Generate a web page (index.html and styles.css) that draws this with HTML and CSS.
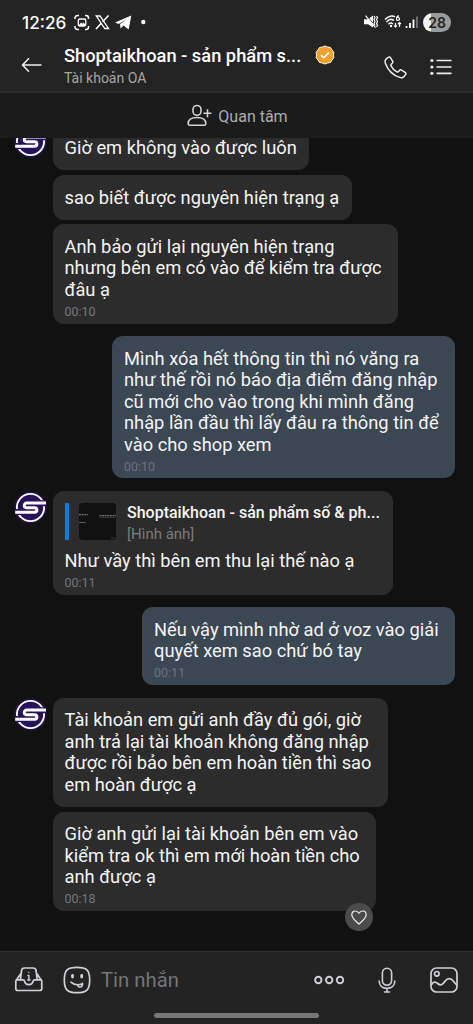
FILE: index.html
```html
<!DOCTYPE html>
<html lang="vi">
<head>
<meta charset="utf-8">
<title>Shoptaikhoan</title>
<link rel="stylesheet" href="styles.css">
</head>
<body>
<svg width="0" height="0" class="defs">
  <symbol id="logo" viewBox="0 0 33 33">
    <circle cx="16.5" cy="16.5" r="16.3" fill="#211044"/>
    <circle cx="16.5" cy="16.5" r="13.6" fill="#29125c" stroke="#fff" stroke-width="1.9"/>
    <path d="M32 12.2H13.2a2.2 2.2 0 0 0 0 4.4h7a2.2 2.2 0 0 1 0 4.5H1.2" fill="none" stroke="#29125c" stroke-width="6"/>
    <path d="M32 12H12.6a2.35 2.35 0 0 0 0 4.7h8a2.3 2.3 0 0 1 0 4.6H1.2" fill="none" stroke="#fff" stroke-width="3"/>
  </symbol>
</svg>
<div class="phone">
  <header class="header">
    <div class="status">
      <span class="clock">12:26</span>
      <svg class="status-left" width="74" height="18" viewBox="0 0 74 18" fill="none" stroke="#fff">
        <path d="M1 5V4a2.500 2.500 0 0 1 2.500-2.500H5M11 1.500h1A2.500 2.500 0 0 1 14.500 4v1M14.500 12v1a2.500 2.500 0 0 1-2.500 2.500h-1M5 15.500H3.500A2.500 2.500 0 0 1 1 13v-1" stroke-width="1.500"/>
        <rect x="4.300" y="5" width="7.500" height="7" rx="1.500" stroke-width="1.300"/><path d="m5 11 2-2.500 1.500 1.200 1.200-1.200L11.500 11v1H5z" fill="#fff" stroke="none"/>
        <path d="M22.300 2h3.700l8.500 12.500h-3.700z" stroke-width="1.300"/><path d="m34.500 1.500-5.900 6.300M27.200 9.200l-5.200 5.800" stroke-width="1.600"/>
        <path d="M41 8.500 57.300 1.500l-2.600 14-5.200-3.900-2.900 2.800-.6-4.300 7-5-8.400 4.800z" fill="#fff" stroke="none"/>
        <circle cx="69.300" cy="8" r="2.200" fill="#fff" stroke="none"/>
      </svg>
      <svg class="status-right" width="56" height="16" viewBox="0 0 56 16" fill="none" stroke="#fff">
        <path d="M0 5.300H4L9 1.500v12L4 10.200H0z" fill="#fff" stroke="none"/>
        <path d="m2.300 1 9.700 12" stroke="#242424" stroke-width="1"/><path d="m1.500 1.700 10 12" stroke-width="1.200"/>
        <path d="m10 2 1 1.500-1 2 1 2-1 2 1 2M12.500 2l1 1.500-1 2 1 2-1 2 1 2-1 1.500" stroke-width="1.200"/>
        <path d="M21 5.500c3.500-4 8-4 10-2.500M22.500 8c2.500-3 5.500-3 7.500-1.500M24.500 10.200c1.500-1.500 3-1.500 4.500-.2" stroke-width="1.500"/><circle cx="27" cy="12" r="1.200" fill="#fff" stroke="none"/>
        <path d="M35 1.800c-2 0-2.500 1.500-2.500 3a1.500 1.500 0 1 0 1-1.200M31.500 9v4m-1.300-1.500 1.300 1.500 1.300-1.500M35.500 13V8.500M34 10l1.500-1.500L37 10" stroke-width="1.200"/>
        <path d="M42.500 12v2M46 9v5M49.500 5.500V14" stroke-width="1.800"/><path d="M53 2.500V14" stroke="#777" stroke-width="1.800"/>
      </svg>
      <span class="battery">28</span>
    </div>
    <div class="titlebar">
      <svg class="back" width="22" height="16" viewBox="0 0 22 16" fill="none" stroke="#eee" stroke-width="1.500"><path d="M20.500 8H1.500M8 1.300 1.500 8 8 14.700"/></svg>
      <div class="names">
        <div class="name">Shoptaikhoan - sản phẩm s...</div>
        <div class="sub">Tài khoản OA</div>
      </div>
      <svg class="verified" width="20" height="20" viewBox="0 0 20 20"><path d="m10 1 2.700 1 2.800.500 1.500 2.500 1.800 2.200-.3 2.800.3 2.800-1.800 2.200-1.500 2.500-2.800.500-2.700 1-2.700-1-2.800-.5L3 15l-1.800-2.200.3-2.800-.3-2.800L3 5l1.500-2.500L7.300 2z" fill="#f7a12d" stroke="#fff5e5" stroke-width="1"/><path d="m6 10.200 2.700 2.500L14 7.700" fill="none" stroke="#fff" stroke-width="1.700"/></svg>
      <svg class="call" width="23" height="23" viewBox="0 0 23 23" fill="none" stroke="#eee" stroke-width="1.500" stroke-linejoin="round"><path d="M2.500 2.600 4.200 1.300a1.500 1.500 0 0 1 2.200.3l2.200 3.600a1.700 1.700 0 0 1-.4 2.100L7.300 8.200c-.5.500-.6 1-.3 1.600 1.200 2.700 3.200 4.700 5.900 6.100.7.300 1.200.2 1.600-.3l1-1.200a1.600 1.600 0 0 1 2-.3l3.700 2.200a1.500 1.500 0 0 1 .4 2.200l-1.500 1.900c-1.100 1.300-2.800 1.600-4.400 1C8.800 19 3.700 14 1.300 6.900.8 5.200 1.100 3.700 2.500 2.600z"/></svg>
      <svg class="menu" width="22" height="18" viewBox="0 0 22 18" stroke="#eee" stroke-width="1.700" fill="#eee"><path d="M6.500 2.500h15M6.500 9h15M6.500 15.300h15"/><g stroke="none"><circle cx="1.900" cy="2.500" r="1.600"/><circle cx="1.900" cy="9" r="1.600"/><circle cx="1.900" cy="15.300" r="1.600"/></g></svg>
    </div>
  </header>
  <div class="follow">
    <svg width="26" height="24" viewBox="0 0 26 24" fill="none" stroke="#d2d2d2" stroke-width="1.600" stroke-linejoin="round"><rect x="6" y="1.500" width="8" height="9.800" rx="4"/><path d="M1.200 19.500c0-4 3.500-6 8.800-6s8.800 2 8.800 6c0 1.200-.5 1.700-1.600 1.700H2.800c-1.100 0-1.600-.5-1.600-1.700zM20.500 5.300v8M16.500 9.300h8"/></svg>
    <span>Quan tâm</span>
  </div>
  <main class="chat">
    <div class="group">
      <svg class="avatar"><use href="#logo"/></svg>
      <div class="stack">
        <div class="bubble w256">Giờ em không vào được luôn</div>
        <div class="bubble w299">sao biết được nguyên hiện trạng ạ</div>
        <div class="bubble w345">Anh bảo gửi lại nguyên hiện trạng<br>nhưng bên em có vào để kiểm tra được<br>đâu ạ<div class="time">00:10</div></div>
      </div>
    </div>
    <div class="bubble sent w343">Mình xóa hết thông tin thì nó văng ra<br>như thế rồi nó báo địa điểm đăng nhập<br>cũ mới cho vào trong khi mình đăng<br>nhập lần đầu thì lấy đâu ra thông tin để<br>vào cho shop xem<div class="time">00:10</div></div>
    <div class="group">
      <svg class="avatar"><use href="#logo"/></svg>
      <div class="stack">
        <div class="bubble w340">
          <div class="quote">
            <svg class="thumb" width="37" height="37" viewBox="0 0 38 38"><rect width="38" height="38" rx="4" fill="#111"/><path d="M0 12h9M21 13h17" stroke="#777" stroke-width="1.200" stroke-dasharray="2 .7"/><path d="M21 14.800h16" stroke="#444" stroke-width=".8"/><path d="M0 20h7" stroke="#777" stroke-width=".8"/><path d="M33 36h3" stroke="#444"/></svg>
            <div class="quote-text"><div class="quote-name">Shoptaikhoan - sản phẩm số &amp; ph...</div><div class="quote-kind">[Hình ảnh]</div></div>
          </div>
          Như vầy thì bên em thu lại thế nào ạ<div class="time">00:11</div>
        </div>
      </div>
    </div>
    <div class="bubble sent w313">Nếu vậy mình nhờ ad ở voz vào giải<br>quyết xem sao chứ bó tay<div class="time">00:11</div></div>
    <div class="group">
      <svg class="avatar"><use href="#logo"/></svg>
      <div class="stack">
        <div class="bubble w335">Tài khoản em gửi anh đầy đủ gói, giờ<br>anh trả lại tài khoản không đăng nhập<br>được rồi bảo bên em hoàn tiền thì sao<br>em hoàn được ạ</div>
        <div class="bubble w323">Giờ anh gửi lại tài khoản bên em vào<br>kiểm tra ok thì em mới hoàn tiền cho<br>anh được ạ<div class="time">00:18</div>
          <span class="like"><svg width="16" height="15" viewBox="0 0 16 15" fill="none" stroke="#eee" stroke-width="1.200" stroke-linejoin="round"><path d="M8 14C4 10.500.8 8 .8 4.700.8 2.500 2.400 1 4.300 1 6 1 7.200 1.800 8 3.200 8.800 1.800 10 1 11.700 1c1.900 0 3.500 1.500 3.500 3.700C15.200 8 12 10.500 8 14z"/></svg></span>
        </div>
      </div>
    </div>
  </main>
  <footer class="composer">
    <div class="tools">
      <svg width="30" height="28" viewBox="0 0 30 28" fill="none" stroke="#d0d1d6" stroke-width="1.700" stroke-linejoin="round" stroke-linecap="round"><path d="M3.300 13.800H9c1.300 0 1.500.8 1.700 1.800.5 2.500 2 3 4.100 3s3.600-.5 4.100-3c.2-1 .4-1.800 1.700-1.800h5.700c1 0 1.500.5 1.500 1.500v7.200c0 1.400-.7 2-2 2h-22c-1.300 0-2-.6-2-2v-7.200c0-1 .5-1.500 1.500-1.500z"/><path d="m6.500 13.500 1-8.800C7.700 2.700 8.500 2 10.500 2h8.600c2 0 2.800.7 3 2.700l1 8.800M6.500 8l-4 6M23.100 8l4 6" /><path d="M13.900 9.500h1v4.500M13.700 14h2.400M14.800 6.500v.1" stroke-width="1.400"/></svg>
      <svg width="28" height="28" viewBox="0 0 28 28" fill="none" stroke="#d0d1d6" stroke-width="1.700" stroke-linecap="round" stroke-linejoin="round"><path d="M14 1.300c9.500 0 12.700 2.800 12.700 12.700S23.500 26.700 14 26.700 1.300 23.900 1.300 14 4.500 1.300 14 1.300z"/><path d="M9.500 9.300v1.800M18.700 9.300v1.800" stroke-width="2.800"/><path d="M8 16.200c2.800 2.700 7.700 3 11.500 1.500M14.500 18.700c.5 3.500 5.500 3 5-1.300" stroke-width="1.600"/></svg>
      <span class="placeholder">Tin nhắn</span>
      <svg width="30" height="10" viewBox="0 0 30 10" fill="none" stroke="#d0d1d6" stroke-width="1.900"><circle cx="4.300" cy="5" r="3.200"/><circle cx="15.200" cy="5" r="3.200"/><circle cx="26" cy="5" r="3.200"/></svg>
      <svg class="mic" width="18" height="26" viewBox="0 0 18 26" fill="none" stroke="#d0d1d6" stroke-width="1.600" stroke-linecap="round"><rect x="4.400" y="1.200" width="9.200" height="17" rx="4.600"/><path d="M1.200 14c0 4.500 3.200 7.300 7.800 7.300s7.800-2.800 7.800-7.300M9 21.500V25M6.500 25h5"/></svg>
      <svg width="28" height="26" viewBox="0 0 28 26" fill="none" stroke="#d0d1d6" stroke-width="1.700"><rect x="1" y="1" width="26" height="24" rx="5.500"/><circle cx="6.800" cy="6.800" r="2.300"/><path d="M1.200 18c1.800-3.500 4.300-3.500 6.500-1.500 3.500 3 5.300.5 7.300-2.200 2.800-3.700 5.700-3.700 8.500 0 1.200 1.600 2 2.700 3.500 3.700"/></svg>
    </div>
    <div class="home"></div>
  </footer>
</div>
</body>
</html>
```
FILE: styles.css
```css
* { box-sizing: border-box; }
body { margin: 0; background: #111; font-family: Roboto, "Noto Sans", sans-serif; color: #f4f4f4; }
svg { display: block; flex: none; }
.defs { position: absolute; }
.phone { width: 473px; height: 1024px; display: flex; flex-direction: column; overflow: hidden; }
.header { height: 93px; background: #242424; border-bottom: 2px solid #2d2d2d; flex: none; }
.status { height: 44px; display: flex; align-items: center; padding-left: 22px; }
.clock { width: 52px; font: 500 17.2px/20px Inter, sans-serif; color: #fff; white-space: nowrap; margin-top: 1px; }
.status-left { margin-top: 2px; }
.status-right { margin-left: 216px; }
.battery { margin-left: 3px; width: 28px; height: 19px; border-radius: 10px; background: linear-gradient(90deg, #f0f0f0 28%, #9b9b9b 28%); color: #242424; text-align: center; font: 600 14px/19px Inter, sans-serif; }
.titlebar { height: 47px; display: flex; padding-left: 21px; }
.back { margin-top: 13px; }
.names { margin-left: 21px; width: 240px; white-space: nowrap; }
.name { font-size: 18.300px; font-weight: 500; line-height: 22px; margin-top: 1px; color: #fff; }
.sub { font-size: 14px; line-height: 18px; margin-top: 2px; color: #a5a5a5; }
.verified { margin: 1px 0 0 11px; }
.call { margin: 12px 0 0 49px; width: 23px; }
.menu { margin: 14px 0 0 23px; }
.follow { height: 45px; flex: none; background: #1b1b1b; display: flex; align-items: center; justify-content: center; gap: 5px; font-size: 16px; color: #adadad; padding-left: 2px; }
.follow span { margin-top: 2px; }
.chat { flex: 1; min-height: 0; overflow: hidden; display: flex; flex-direction: column; justify-content: flex-end; gap: 12.500px; padding: 0 18px 40px 14px; }
.group { display: flex; gap: 6px; flex: none; }
.avatar { width: 33px; height: 33px; }
.stack { display: flex; flex-direction: column; gap: 4.800px; }
.bubble { position: relative; flex: none; background: #2c2c2c; border-radius: 11px; padding: 11.600px 11.500px; font-size: 18.300px; line-height: 21.450px; white-space: nowrap; }
.sent { align-self: flex-end; background: #3c4754; padding-left: 12px; }
.w256 { width: 256px; }
.w299 { width: 299px; }
.w313 { width: 313px; }
.w323 { width: 323px; }
.w335 { width: 335px; }
.w340 { width: 340px; }
.w343 { width: 343px; }
.w345 { width: 345px; }
.time { font-size: 12.500px; line-height: 15px; margin-top: 3.500px; margin-bottom: -6.700px; color: #73777d; }
.sent .time { color: #667382; }
.quote { display: flex; height: 37px; margin-bottom: 10.500px; }
.quote::before { content: ""; width: 4px; border-radius: 1px; background: #087fe5; }
.thumb { margin-left: 10.500px; }
.quote-text { margin-left: 11px; line-height: 20px; }
.quote-name { font-size: 16px; font-weight: 500; }
.quote-kind { font-size: 15px; color: #777b80; margin-top: 1px; }
.like { position: absolute; right: 3px; bottom: -20px; width: 28px; height: 28px; border-radius: 50%; background: #4b4b4b; display: flex; align-items: center; justify-content: center; }
.composer { height: 73px; flex: none; background: #232323; border-top: 1px solid #303030; }
.tools { height: 56px; display: flex; align-items: center; padding-left: 14px; }
.tools svg:nth-child(2) { margin-left: 19px; }
.placeholder { margin-left: 10px; width: 213px; font-size: 20.300px; color: #71757a; }
.mic { margin-left: 34px; }
.mic + svg { margin-left: 34px; }
.home { width: 165px; height: 5px; margin: 5px auto 0; border-radius: 3px; background: #777; }
```
